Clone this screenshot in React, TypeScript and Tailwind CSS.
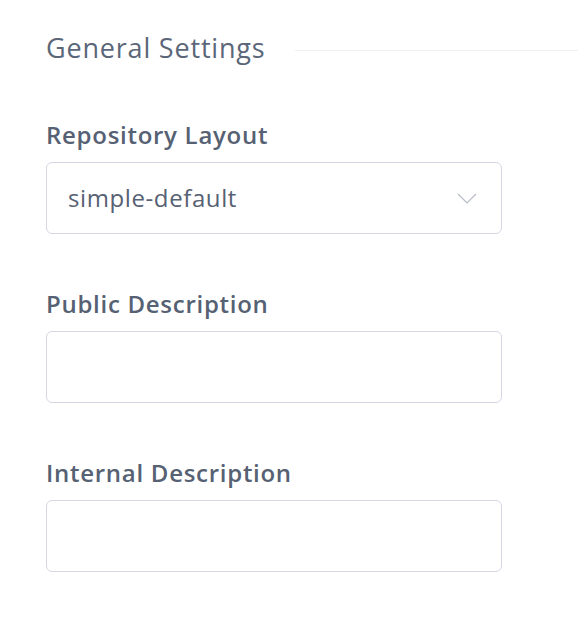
import { ReactNode } from 'react';

const font = { fontFamily: '"Open Sans", "Noto Sans", sans-serif' };

function Field({ label, children }: { label: string; children: ReactNode }) {
  return (
    <div className="flex flex-col">
      <label className="text-[24px] leading-[30px] font-semibold tracking-[0.03em] text-[#566173]">{label}</label>
      <div className="mt-[12px]">{children}</div>
    </div>
  );
}

export default function App() {
  return (
    <div className="min-h-screen bg-white pl-[46px] pt-[29px]" style={font}>
      {/* Section header */}
      <div className="flex items-center">
        <h2 className="text-[27px] leading-[38px] font-normal tracking-[0.03em] text-[#5b6779]">General Settings</h2>
        <div className="flex-1 h-px bg-[#eff0f3] ml-[30px] mt-[4px]" />
      </div>

      <div className="mt-[53px] flex flex-col gap-[55px] w-[456px]">
        <Field label="Repository Layout">
          <div className="h-[72px] rounded-[6px] border border-[#d5d8e4] flex items-center justify-between pl-[21px] pr-[24px]">
            <span className="text-[24px] tracking-[0.025em] text-[#566173]">simple-default</span>
            <svg width="20" height="11" viewBox="0 0 20 11" fill="none" className="text-[#b7bcc7]">
              <path d="M1 1l9 9 9-9" stroke="currentColor" strokeWidth="1.2" />
            </svg>
          </div>
        </Field>
        <Field label="Public Description">
          <input className="h-[72px] w-full rounded-[6px] border border-[#d5d8e4] px-[22px] text-[24px] text-[#566173] outline-none" />
        </Field>
        <Field label="Internal Description">
          <input className="h-[72px] w-full rounded-[6px] border border-[#d5d8e4] px-[22px] text-[24px] text-[#566173] outline-none" />
        </Field>
      </div>
    </div>
  );
}
